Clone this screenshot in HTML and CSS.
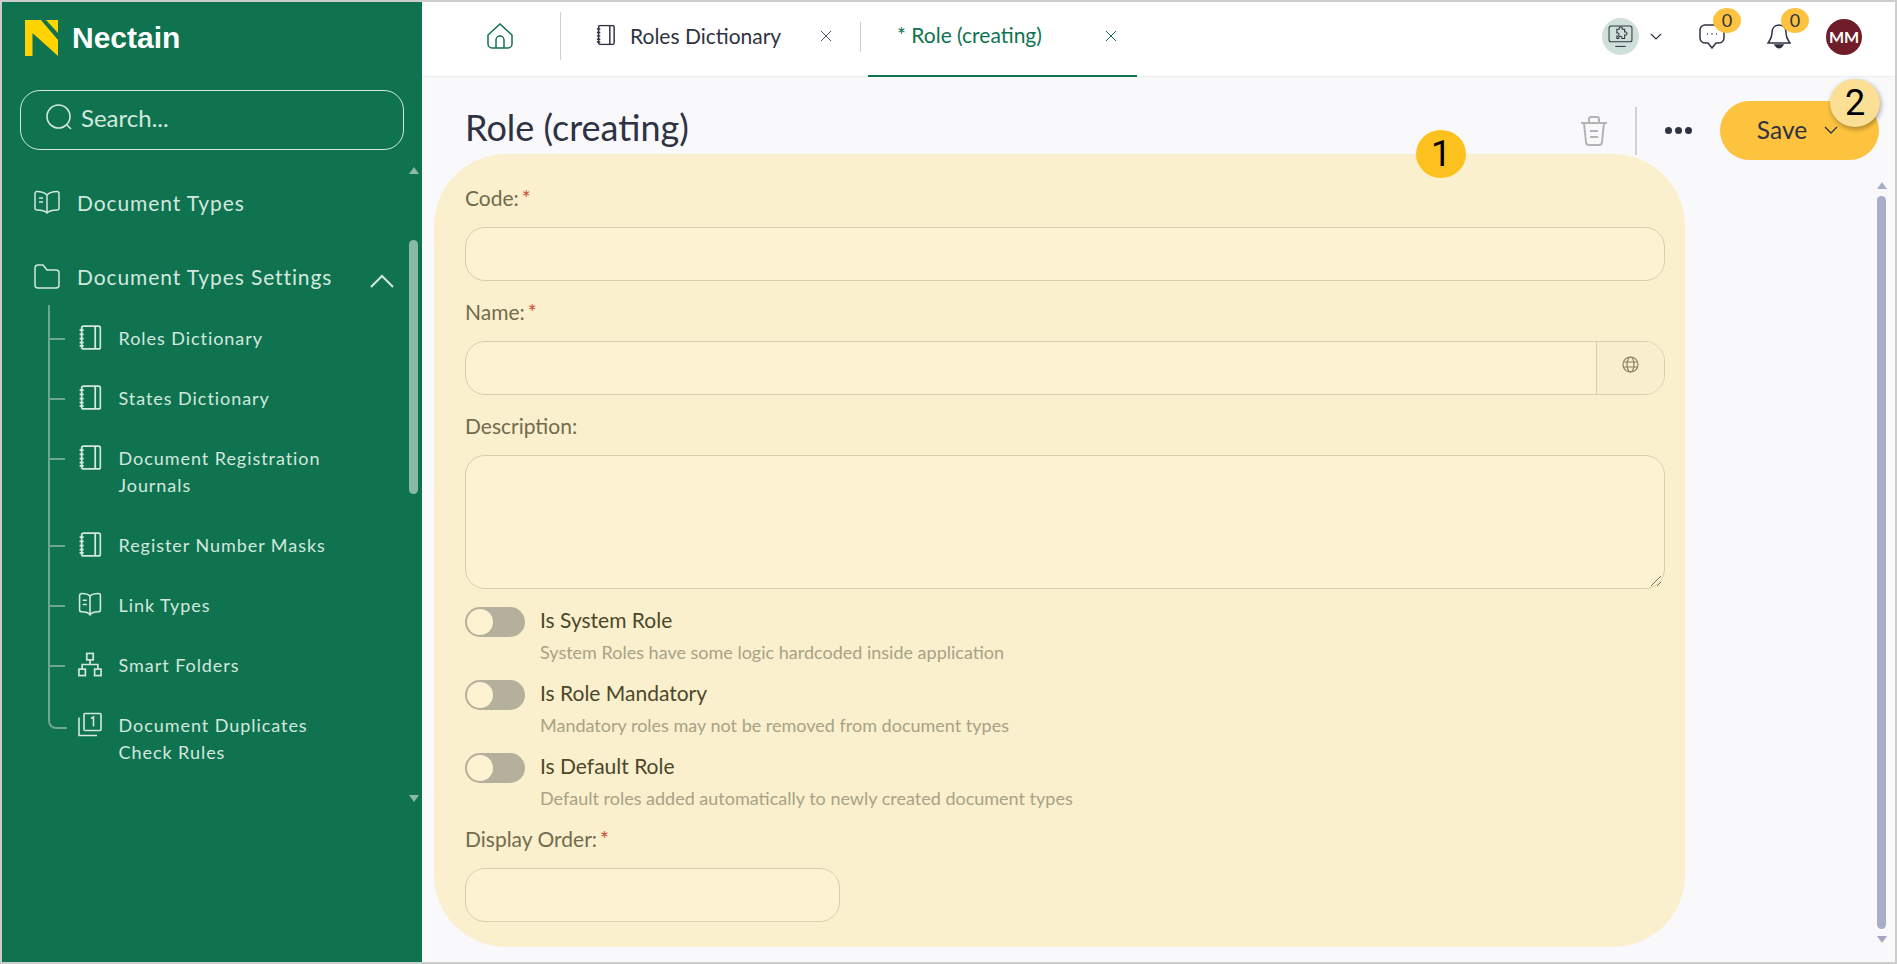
FILE: index.html
```html
<!DOCTYPE html>
<html lang="en">

<head>
    <meta charset="UTF-8">
    <meta name="viewport" content="width=device-width, initial-scale=1.0">
    <title>Nectain - Role (creating)</title>
    <link rel="stylesheet" href="styles.css">
</head>

<body>
    <aside class="sidebar">
        <div class="brand">
            <svg class="brand-logo" viewBox="0 0 33 36" width="33" height="36">
                <path fill="#ffd400" d="M0 0H16L33 20V36L7.500 13V36H0Z" />
                <path fill="#ffd400" d="M21 0H33V13Z" />
            </svg>
            <span class="brand-name">Nectain</span>
        </div>
        <div class="search">
            <svg viewBox="0 0 26 26" width="26" height="26" fill="none" stroke="currentColor" stroke-width="1.6">
                <circle cx="12.5" cy="12.5" r="11.5" />
                <path d="M21 21l4 4" />
            </svg>
            <span>Search...</span>
        </div>
        <div class="nav-wrap">
            <nav class="nav">
                <div class="nav-item">
                    <svg class="nav-icon" viewBox="0 0 26 24" width="26" height="24" fill="none" stroke="currentColor" stroke-width="1.5">
                        <path d="M13 5C10 2 5 1.500 3 1.500A2 2 0 0 0 1 3.500V18A2 2 0 0 0 3 20C6 20 10 20 13 23C16 20 20 20 23 20A2 2 0 0 0 25 18V3.500A2 2 0 0 0 23 1.500C21 1.500 16 2 13 5V23" />
                        <path d="M5 8H9M5 12H9" />
                    </svg>
                    <span>Document Types</span>
                </div>
                <div class="nav-item">
                    <svg class="nav-icon" viewBox="0 0 26 26" width="26" height="26" fill="none" stroke="currentColor" stroke-width="1.5">
                        <path d="M1 5a3 3 0 0 1 3-3h5l4 5h9a3 3 0 0 1 3 3v12a3 3 0 0 1-3 3H4a3 3 0 0 1-3-3Z" />
                    </svg>
                    <span>Document Types Settings</span>
                    <svg class="nav-chevron" viewBox="0 0 24 14" width="24" height="14" fill="none" stroke="currentColor" stroke-width="2">
                        <path d="M1 13L12 2L23 13" />
                    </svg>
                </div>
                <ul class="tree">
                    <li class="tree-item">
                        <svg class="tree-icon" viewBox="0 0 22 24"><use href="#notebook" /></svg>
                        <span>Roles Dictionary</span>
                    </li>
                    <li class="tree-item">
                        <svg class="tree-icon" viewBox="0 0 22 24"><use href="#notebook" /></svg>
                        <span>States Dictionary</span>
                    </li>
                    <li class="tree-item">
                        <svg class="tree-icon" viewBox="0 0 22 24"><use href="#notebook" /></svg>
                        <span>Document Registration<br>Journals</span>
                    </li>
                    <li class="tree-item">
                        <svg class="tree-icon" viewBox="0 0 22 24"><use href="#notebook" /></svg>
                        <span>Register Number Masks</span>
                    </li>
                    <li class="tree-item">
                        <svg class="tree-icon" viewBox="0 0 22 24" fill="none" stroke="currentColor" stroke-width="1.5">
                            <path d="M11 4C9 2 5 1.500 3 1.500A2 2 0 0 0 1 3.500V17A2 2 0 0 0 3 19C5 19 9 19 11 22C13 19 17 19 19 19A2 2 0 0 0 21 17V3.500A2 2 0 0 0 19 1.500C17 1.500 13 2 11 4V22" />
                            <path d="M4 8H8M4 12H8" />
                        </svg>
                        <span>Link Types</span>
                    </li>
                    <li class="tree-item">
                        <svg class="tree-icon" viewBox="0 0 26 26" fill="none" stroke="currentColor" stroke-width="1.8">
                            <rect x="9.5" y="1" width="7" height="7" />
                            <rect x="1" y="18" width="7" height="7" />
                            <rect x="18" y="18" width="7" height="7" />
                            <path d="M13 8V13M4.500 18V13H21.500V18" />
                        </svg>
                        <span>Smart Folders</span>
                    </li>
                    <li class="tree-item">
                        <svg class="tree-icon" viewBox="0 0 24 24" fill="none" stroke="currentColor" stroke-width="1.6">
                            <rect x="6" y="1" width="17" height="17" rx="1" />
                            <path d="M1 5V23H19" />
                            <path d="M13 6l2.500-1.500V14" />
                        </svg>
                        <span>Document Duplicates<br>Check Rules</span>
                    </li>
                </ul>
            </nav>
            <div class="side-scroll">
                <span class="arrow-up"></span>
                <span class="side-thumb"></span>
                <span class="arrow-down"></span>
            </div>
        </div>
    </aside>

    <!-- shared symbol for the notebook icon -->
    <svg class="defs" width="0" height="0">
        <symbol id="notebook" viewBox="0 0 22 24">
            <g fill="none" stroke="currentColor" stroke-width="1.7">
                <rect x="3" y="1" width="18" height="22" rx="2" />
                <path d="M16 1V23M1 5H5M1 9H5M1 13H5M1 17H5M1 20H5" />
            </g>
        </symbol>
    </svg>

    <div class="main">
        <header class="topbar">
            <div class="home-tab">
                <svg viewBox="0 0 26 26" width="26" height="26" fill="none" stroke="#0f7350" stroke-width="1.5">
                    <path d="M1 12L13 1L25 12V21a4 4 0 0 1-4 4H5a4 4 0 0 1-4-4Z" />
                    <path d="M9 25V17a4 4 0 0 1 8 0V25" />
                </svg>
            </div>
            <div class="tab tab-first">
                <svg viewBox="0 0 22 24" width="19" height="22" class="tab-icon"><use href="#notebook" /></svg>
                <span>Roles Dictionary</span>
                <svg class="tab-close" viewBox="0 0 12 12" width="12" height="12" fill="none" stroke="currentColor"><path d="M1 1L11 11M11 1L1 11" /></svg>
            </div>
            <div class="tab tab-active">
                <span>* Role (creating)</span>
                <svg class="tab-close" viewBox="0 0 12 12" width="12" height="12" fill="none" stroke="currentColor"><path d="M1 1L11 11M11 1L1 11" /></svg>
            </div>
            <div class="top-actions">
                <div class="env">
                    <svg viewBox="0 0 24 22" width="25" height="23" fill="none" stroke="#2f3242" stroke-width="1">
                        <rect x="1" y="1" width="22" height="15" rx="2" />
                        <path d="M7 20.500H17" />
                        <path d="M8.500 4h2.200a1.600 1.600 0 1 1 3 0H16v2.600a1.600 1.600 0 1 1 0 3V13h-2.600a1.600 1.600 0 1 0-3 0H8.500v-2.400a1.600 1.600 0 1 0 0-3Z" />
                    </svg>
                </div>
                <svg class="env-chevron" viewBox="0 0 12 7" width="12" height="7" fill="none" stroke="#2f3242" stroke-width="1.2"><path d="M1 1L6 6L11 1" /></svg>
                <div class="notify notify-chat">
                    <svg viewBox="0 0 26 25" width="26" height="25" fill="none" stroke="#2f3242" stroke-width="1.5">
                        <path d="M6 1H20a5 5 0 0 1 5 5V14a5 5 0 0 1-5 5H17L13 24L9 19H6a5 5 0 0 1-5-5V6a5 5 0 0 1 5-5Z" />
                        <path d="M8 10H9M12.500 10H13.500M17 10H18" />
                    </svg>
                    <span class="count">0</span>
                </div>
                <div class="notify notify-bell">
                    <svg viewBox="0 0 24 25" width="24" height="25" fill="none" stroke="#2f3242" stroke-width="1.5">
                        <path d="M12 1C7 1 5 5 5 9C5 14 3 16 1 19H23C21 16 19 14 19 9C19 5 17 1 12 1Z" />
                        <path d="M8 21C10 24.500 14 24.500 16 21Z" fill="#2f3242" />
                    </svg>
                    <span class="count">0</span>
                </div>
                <div class="avatar">MM</div>
            </div>
        </header>

        <div class="page">
            <div class="page-head">
                <h1>Role (creating)</h1>
                <div class="page-actions">
                    <svg class="trash" viewBox="0 0 28 30" width="28" height="30" fill="none" stroke="#b4b4b4" stroke-width="2">
                        <path d="M1 7H27M9 7V3a2 2 0 0 1 2-2h6a2 2 0 0 1 2 2V7" />
                        <path d="M4 7L6 26a3 3 0 0 0 3 3H19a3 3 0 0 0 3-3L24 7" />
                        <path d="M10 15H18M10 21H18" />
                    </svg>
                    <span class="divider"></span>
                    <span class="dots"><i></i><i></i><i></i></span>
                    <button class="save">
                        Save
                        <svg viewBox="0 0 14 8" width="14" height="8" fill="none" stroke="#2f3242" stroke-width="1.3"><path d="M1 1L7 7L13 1" /></svg>
                    </button>
                    <span class="step step-two">2</span>
                </div>
            </div>

            <div class="content">
                <form class="highlight">
                    <span class="step step-one">1</span>

                    <label class="field-label">Code:<em>*</em></label>
                    <div class="input"></div>

                    <label class="field-label">Name:<em>*</em></label>
                    <div class="input input-lang">
                        <div class="lang">
                            <svg viewBox="0 0 17 17" width="17" height="17" fill="none" stroke="#8a8262" stroke-width="1.2">
                                <circle cx="8.5" cy="8.5" r="7.5" />
                                <ellipse cx="8.5" cy="8.5" rx="3.5" ry="7.5" />
                                <path d="M1.500 6H15.500M1.500 11H15.500" />
                            </svg>
                        </div>
                    </div>

                    <label class="field-label">Description:</label>
                    <div class="input textarea">
                        <svg class="grip" viewBox="0 0 12 12" width="12" height="12" fill="none" stroke="#7d7452"><path d="M1 11L11 1M7 11L11 7" /></svg>
                    </div>

                    <div class="switch-row">
                        <span class="switch"><i></i></span>
                        <div>
                            <div class="switch-title">Is System Role</div>
                            <div class="switch-hint">System Roles have some logic hardcoded inside application</div>
                        </div>
                    </div>
                    <div class="switch-row">
                        <span class="switch"><i></i></span>
                        <div>
                            <div class="switch-title">Is Role Mandatory</div>
                            <div class="switch-hint">Mandatory roles may not be removed from document types</div>
                        </div>
                    </div>
                    <div class="switch-row">
                        <span class="switch"><i></i></span>
                        <div>
                            <div class="switch-title">Is Default Role</div>
                            <div class="switch-hint">Default roles added automatically to newly created document types</div>
                        </div>
                    </div>

                    <label class="field-label order-label">Display Order:<em>*</em></label>
                    <div class="input input-short"></div>
                </form>

                <div class="main-scroll">
                    <span class="arrow-up"></span>
                    <span class="main-thumb"></span>
                    <span class="arrow-down"></span>
                </div>
            </div>
        </div>
    </div>
</body>

</html>
```

FILE: styles.css
```css
* {
    box-sizing: border-box;
}

html,
body {
    height: 100%;
}

body {
    margin: 0;
    display: flex;
    height: 964px;
    overflow: hidden;
    border: 2px solid #cdcdcd;
    background: #f9f9fb;
    font-family: Lato, "Open Sans", sans-serif;
    color: #2f3242;
}

.defs {
    position: absolute;
}

/* sidebar */
.sidebar {
    width: 420px;
    flex-shrink: 0;
    background: #0f7350;
    color: #d3e8df;
}

.brand {
    display: flex;
    align-items: center;
    gap: 14px;
    height: 88px;
    padding: 0 0 16px 23px;
}

.brand-name {
    font-family: "Liberation Sans", Arial, sans-serif;
    font-size: 30px;
    font-weight: 700;
    color: #fff;
}

.search {
    display: flex;
    align-items: center;
    gap: 9px;
    width: 384px;
    height: 60px;
    margin-left: 18px;
    padding: 0 0 6px 25px;
    border: 1px solid #d3e8df;
    border-radius: 20px;
    font-size: 24px;
}

.nav-wrap {
    display: flex;
    justify-content: space-between;
    padding: 18px 4px 0 0;
}

.nav {
    flex: 1;
    padding: 16px 0 0 32px;
}

.nav-item {
    display: flex;
    align-items: center;
    height: 36px;
    margin-bottom: 38px;
    padding-right: 15px;
    font-size: 21px;
    letter-spacing: 0.9px;
}

.nav-icon {
    margin-right: 17px;
    flex-shrink: 0;
}

.nav-chevron {
    margin-left: auto;
    margin-top: 10px;
}

.tree {
    list-style: none;
    margin: -7px 0 0 14px;
    padding: 0;
    position: relative;
}

/* vertical guide, bends into the last branch */
.tree::before {
    content: "";
    position: absolute;
    left: 0;
    top: -20px;
    bottom: 37px;
    width: 17px;
    border-left: 2px solid #6fa892;
    border-bottom: 2px solid #6fa892;
    border-bottom-left-radius: 8px;
}

.tree-item {
    display: flex;
    align-items: flex-start;
    position: relative;
    padding-left: 30px;
    margin-bottom: 33px;
    font-size: 18px;
    line-height: 27px;
    letter-spacing: 0.95px;
}

.tree-item::before {
    content: "";
    position: absolute;
    left: 2px;
    top: 13px;
    width: 15px;
    height: 2px;
    background: #6fa892;
}

.tree-item:last-child::before {
    display: none;
}

.tree-icon {
    width: 24px;
    height: 25px;
    margin-right: 16.5px;
    flex-shrink: 0;
}

.side-scroll {
    display: flex;
    flex-direction: column;
    align-items: center;
    width: 9px;
    height: 635px;
    margin-top: -1px;
}

.side-thumb {
    width: 9px;
    height: 254px;
    margin-top: 66px;
    border-radius: 5px;
    background: #8ab9a6;
}

.side-scroll .arrow-up {
    border-bottom-color: #8ab9a6;
}

.side-scroll .arrow-down {
    margin-top: auto;
    border-top-color: #8ab9a6;
}

.arrow-up,
.arrow-down {
    width: 0;
    height: 0;
    border-left: 5px solid transparent;
    border-right: 5px solid transparent;
}

.arrow-up {
    border-bottom: 7px solid #a6aec8;
}

.arrow-down {
    border-top: 7px solid #a6a6c0;
}

/* top bar */
.main {
    flex: 1;
    display: flex;
    flex-direction: column;
    min-width: 0;
}

.topbar {
    display: flex;
    align-items: stretch;
    height: 75px;
    background: #fff;
    border-bottom: 1px solid #ecedf0;
}

.home-tab {
    display: flex;
    align-items: center;
    justify-content: center;
    width: 139px;
    height: 48px;
    margin-top: 10px;
    padding-left: 18px;
    border-right: 1px solid #cfd1d6;
}

.tab {
    display: flex;
    align-items: center;
    height: 75px;
    padding-bottom: 8px;
    font-size: 21px;
}

.tab-first {
    position: relative;
    width: 307px;
    padding-left: 35px;
    padding-right: 36px;
    padding-bottom: 9px;
}

.tab-first::after {
    content: "";
    position: absolute;
    right: 7px;
    top: 20px;
    height: 30px;
    width: 1px;
    background: #cfd1d6;
}

.tab-icon {
    color: #2f3242;
    margin-right: 15px;
}

.tab-close {
    color: #4d5060;
    margin-left: auto;
    margin-top: 2px;
}

.tab-active {
    width: 269px;
    padding-left: 29px;
    padding-right: 20px;
    color: #0f7350;
    border-bottom: 2px solid #0f7350;
}

.tab-active .tab-close {
    color: #0f7350;
}

.top-actions {
    flex: 1;
    display: flex;
    align-items: center;
    justify-content: flex-end;
    padding: 0 33px 5px 0;
}

.env {
    display: flex;
    align-items: center;
    justify-content: center;
    width: 37px;
    height: 37px;
    border-radius: 50%;
    background: #cfe0d9;
}

.env-chevron {
    margin: 0 37px 0 11px;
}

.notify {
    position: relative;
    height: 25px;
}

.notify-chat {
    margin-right: 42px;
}

.notify-bell {
    margin-right: 35px;
}

.count {
    position: absolute;
    left: 14px;
    top: -16px;
    width: 28px;
    height: 25px;
    border-radius: 50%;
    background: #fdc33e;
    font-size: 18px;
    line-height: 25px;
    text-align: center;
}

.avatar {
    width: 36px;
    height: 36px;
    border-radius: 50%;
    background: #6f1d28;
    color: #fff;
    font-size: 16px;
    font-weight: 700;
    line-height: 36px;
    text-align: center;
}

/* page */
.page {
    flex: 1;
    display: flex;
    flex-direction: column;
    min-height: 0;
}

.page-head {
    display: flex;
    align-items: center;
    justify-content: space-between;
    height: 77px;
    padding: 30px 16px 0 43px;
}

h1 {
    margin: 0;
    padding-bottom: 7px;
    font-size: 36px;
    font-weight: 400;
}

.page-actions {
    display: flex;
    align-items: center;
    position: relative;
}

.trash {
    margin-right: 27px;
}

.divider {
    width: 2px;
    height: 48px;
    background: #cfd1d6;
    margin-right: 28px;
}

.dots {
    display: flex;
    gap: 3px;
    margin-right: 28px;
}

.dots i {
    width: 7px;
    height: 7px;
    border-radius: 50%;
    background: #2f3242;
}

.save {
    display: flex;
    align-items: center;
    justify-content: center;
    gap: 17px;
    width: 159px;
    height: 59px;
    padding: 0 4px 2px 0;
    border: none;
    border-radius: 30px;
    background: #fdc33e;
    color: #2f3242;
    font-family: inherit;
    font-size: 24.5px;
}

.step {
    position: absolute;
    display: flex;
    align-items: center;
    justify-content: center;
    width: 50px;
    height: 48px;
    border-radius: 50%;
    font-family: Roboto, "Liberation Sans", sans-serif;
    font-size: 36px;
    color: #000;
}

.step-one {
    right: 219px;
    top: -24px;
    background: #fdc11f;
}

.step-two {
    right: -1px;
    top: -22px;
    background: #fbdf95;
    box-shadow: 1px 2px 5px rgba(0, 0, 0, 0.35);
}

.content {
    flex: 1;
    display: flex;
    min-height: 0;
    position: relative;
}

.highlight {
    position: relative;
    width: 1251px;
    height: 793px;
    margin-left: 12px;
    padding: 0 20px 0 31px;
    border-radius: 72px;
    background: #faf0cd;
}

.field-label {
    display: block;
    padding-top: 31px;
    height: 73px;
    font-size: 21px;
    line-height: 26px;
    color: #726b4e;
}

.field-label em {
    margin-left: 3px;
    color: #cf4b3a;
    font-style: normal;
}

.input {
    height: 54px;
    margin-bottom: -13px;
    border: 1px solid #d8cfae;
    border-radius: 20px;
    background: #fdf3d2;
}

.input-lang {
    display: flex;
    justify-content: flex-end;
    overflow: hidden;
}

.lang {
    display: flex;
    align-items: center;
    justify-content: center;
    width: 68px;
    padding-bottom: 7px;
    border-left: 1px solid #d8cfae;
    background: #f8efce;
}

.textarea {
    position: relative;
    height: 134px;
    margin-bottom: 18px;
}

.grip {
    position: absolute;
    right: 2px;
    bottom: 1px;
}

.switch-row {
    display: flex;
    gap: 15px;
    height: 73px;
}

.switch {
    width: 60px;
    height: 30px;
    flex-shrink: 0;
    padding: 2px;
    border-radius: 15px;
    background: #b5b09b;
}

.switch i {
    display: block;
    width: 26px;
    height: 26px;
    border-radius: 50%;
    background: #fdf3d2;
}

.switch-title {
    font-size: 21px;
    line-height: 26px;
    color: #4d4729;
}

.switch-hint {
    margin-top: 7px;
    font-size: 18px;
    line-height: 24px;
    color: #a8a287;
}

.order-label {
    padding-top: 0;
    height: 42px;
    margin-top: 0;
}

.input-short {
    width: 375px;
    margin-bottom: 0;
}

.main-scroll {
    position: absolute;
    right: 9px;
    top: 28px;
    bottom: 19px;
    width: 9px;
    display: flex;
    flex-direction: column;
    align-items: center;
}

.main-thumb {
    flex: 1;
    width: 9px;
    margin: 7px 0;
    border-radius: 5px;
    background: #a6aec8;
}
```
